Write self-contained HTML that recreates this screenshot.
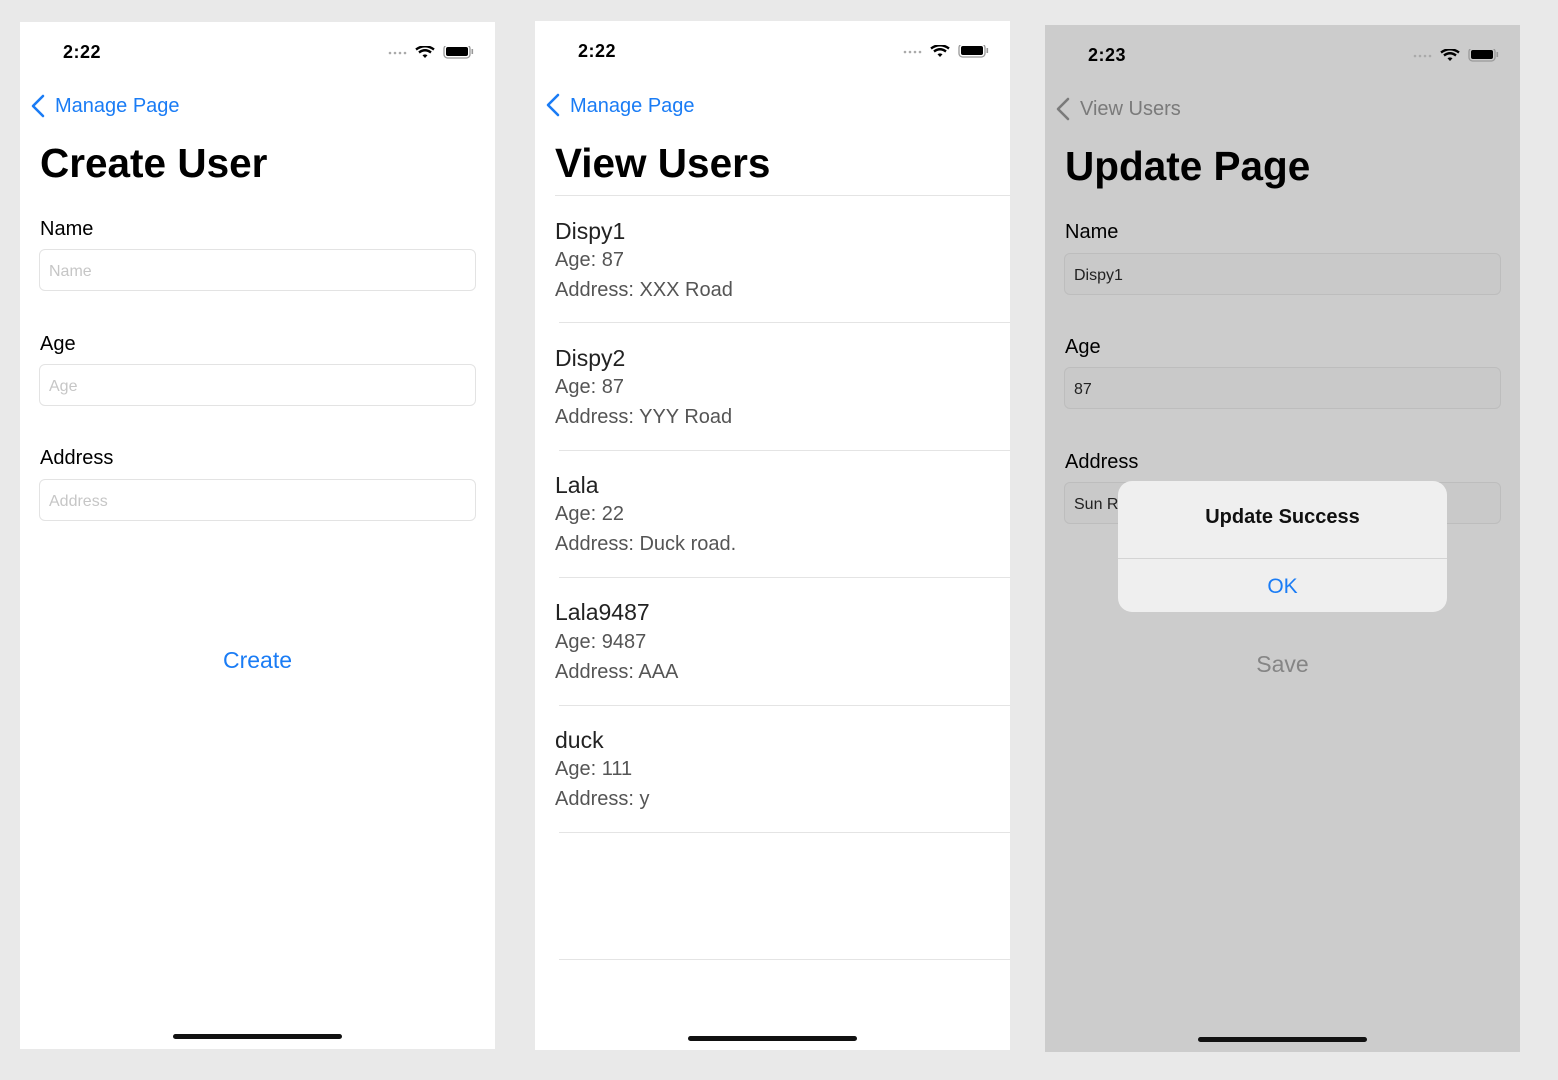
<!DOCTYPE html>
<html><head><meta charset="utf-8"><style>
*{margin:0;padding:0;box-sizing:border-box}
body{width:1558px;height:1080px;background:#e9e9e9;position:relative;overflow:hidden;font-family:"Liberation Sans",sans-serif;color:#000}
.a{position:absolute;white-space:nowrap}
.p{position:absolute}
.time{font-size:18px;font-weight:bold;letter-spacing:0.5px}
.back{font-size:20px;color:#1a7cf5}
.title{font-size:40.5px;font-weight:bold}
.lbl{font-size:20px}
.fld{position:absolute;height:42px;border:1px solid #e3e3e3;border-radius:6px;background:#fff;font-size:16px;color:#c6c6c6;padding-left:9px;line-height:43px}
.nm{font-size:23px;color:#222}
.sub{font-size:20px;color:#555}
.sep{position:absolute;height:1px;background:#e4e4e4}
.home{position:absolute;height:5px;border-radius:3px;background:#111}
.p3 .fld{background:#c9c9c9;border-color:#bdbdbd;color:#222}
</style></head><body>

<svg width="0" height="0" style="position:absolute"><defs>
<g id="st">
<circle cx="2" cy="7" r="1.3" fill="#aaa"/><circle cx="7" cy="7" r="1.3" fill="#aaa"/><circle cx="12" cy="7" r="1.3" fill="#aaa"/><circle cx="17" cy="7" r="1.3" fill="#aaa"/>
<path d="M28 3.5 Q37 -3 46 3.5" stroke="#000" stroke-width="2.4" fill="none"/>
<path d="M31 6.5 Q37 2 43 6.5" stroke="#000" stroke-width="2.4" fill="none"/>
<path d="M34.5 9.3 L37 12 L39.5 9.3 Q37 7.5 34.5 9.3Z" fill="#000"/>
<rect x="56" y="-1" width="26" height="13" rx="3.5" fill="none" stroke="#999" stroke-width="1.3"/>
<rect x="58" y="1" width="22" height="9" rx="2" fill="#000"/>
<rect x="83.5" y="3" width="1.6" height="5" fill="#999"/>
</g></defs></svg>

<!-- Panel 1 -->
<div class="p" style="left:20px;top:22px;width:475px;height:1027px;background:#fff"></div>
<div class="a time" style="left:63px;top:42px">2:22</div>
<svg class="p" style="left:388px;top:46px" width="90" height="16"><use href="#st"/></svg>
<svg class="p" style="left:30px;top:94px" width="16" height="24"><path d="M13 2 L3 12 L13 22" stroke="#1a7cf5" stroke-width="2.6" fill="none" stroke-linecap="round" stroke-linejoin="round"/></svg>
<div class="a back" style="left:55px;top:95px">Manage Page</div>
<div class="a title" style="left:40px;top:140px">Create User</div>
<div class="a lbl" style="left:40px;top:218px">Name</div>
<div class="fld" style="left:39px;top:249px;width:437px">Name</div>
<div class="a lbl" style="left:40px;top:333px">Age</div>
<div class="fld" style="left:39px;top:364px;width:437px">Age</div>
<div class="a lbl" style="left:40px;top:447px">Address</div>
<div class="fld" style="left:39px;top:479px;width:437px">Address</div>
<div class="a" style="left:20px;width:475px;text-align:center;top:647px;font-size:23px;color:#1a7cf5">Create</div>
<div class="home" style="left:173px;top:1034px;width:169px"></div>

<!-- Panel 2 -->
<div class="p" style="left:535px;top:21px;width:475px;height:1029px;background:#fff"></div>
<div class="a time" style="left:578px;top:41px">2:22</div>
<svg class="p" style="left:903px;top:45px" width="90" height="16"><use href="#st"/></svg>
<svg class="p" style="left:545px;top:93px" width="16" height="24"><path d="M13 2 L3 12 L13 22" stroke="#1a7cf5" stroke-width="2.6" fill="none" stroke-linecap="round" stroke-linejoin="round"/></svg>
<div class="a back" style="left:570px;top:95px">Manage Page</div>
<div class="a title" style="left:555px;top:140px">View Users</div>
<div class="sep" style="left:555px;top:195px;width:455px"></div>

<div class="a nm" style="left:555px;top:218px">Dispy1</div>
<div class="a sub" style="left:555px;top:249px">Age: 87</div>
<div class="a sub" style="left:555px;top:279px">Address: XXX Road</div>
<div class="sep" style="left:559px;top:322px;width:451px"></div>

<div class="a nm" style="left:555px;top:345px">Dispy2</div>
<div class="a sub" style="left:555px;top:376px">Age: 87</div>
<div class="a sub" style="left:555px;top:406px">Address: YYY Road</div>
<div class="sep" style="left:559px;top:450px;width:451px"></div>

<div class="a nm" style="left:555px;top:472px">Lala</div>
<div class="a sub" style="left:555px;top:503px">Age: 22</div>
<div class="a sub" style="left:555px;top:533px">Address: Duck road.</div>
<div class="sep" style="left:559px;top:577px;width:451px"></div>

<div class="a nm" style="left:555px;top:599px">Lala9487</div>
<div class="a sub" style="left:555px;top:631px">Age: 9487</div>
<div class="a sub" style="left:555px;top:661px">Address: AAA</div>
<div class="sep" style="left:559px;top:705px;width:451px"></div>

<div class="a nm" style="left:555px;top:727px">duck</div>
<div class="a sub" style="left:555px;top:758px">Age: 111</div>
<div class="a sub" style="left:555px;top:788px">Address: y</div>
<div class="sep" style="left:559px;top:832px;width:451px"></div>
<div class="sep" style="left:559px;top:959px;width:451px"></div>
<div class="home" style="left:688px;top:1036px;width:169px"></div>

<!-- Panel 3 -->
<div class="p p3" style="left:1045px;top:25px;width:475px;height:1027px;background:#cccccc"></div>
<div class="a time" style="left:1088px;top:45px">2:23</div>
<svg class="p" style="left:1413px;top:49px" width="90" height="16"><use href="#st"/></svg>
<svg class="p" style="left:1055px;top:97px" width="16" height="24"><path d="M13 2 L3 12 L13 22" stroke="#7a7a7a" stroke-width="2.6" fill="none" stroke-linecap="round" stroke-linejoin="round"/></svg>
<div class="a back" style="left:1080px;top:98px;color:#7a7a7a">View Users</div>
<div class="a title" style="left:1065px;top:143px">Update Page</div>
<div class="a lbl" style="left:1065px;top:221px">Name</div>
<div class="p3"><div class="fld" style="left:1064px;top:253px;width:437px">Dispy1</div></div>
<div class="a lbl" style="left:1065px;top:336px">Age</div>
<div class="p3"><div class="fld" style="left:1064px;top:367px;width:437px">87</div></div>
<div class="a lbl" style="left:1065px;top:451px">Address</div>
<div class="p3"><div class="fld" style="left:1064px;top:482px;width:437px">Sun Road</div></div>
<div class="a" style="left:1045px;width:475px;text-align:center;top:651px;font-size:23px;color:#858585">Save</div>
<div class="p" style="left:1118px;top:481px;width:329px;height:131px;background:#efefef;border-radius:14px"></div>
<div class="a" style="left:1118px;width:329px;text-align:center;top:506px;font-size:20px;font-weight:bold;color:#111">Update Success</div>
<div class="p" style="left:1118px;top:558px;width:329px;height:1px;background:#d4d4d4"></div>
<div class="a" style="left:1118px;width:329px;text-align:center;top:575px;font-size:21px;color:#1a7cf5">OK</div>
<div class="home" style="left:1198px;top:1037px;width:169px"></div>
</body></html>
